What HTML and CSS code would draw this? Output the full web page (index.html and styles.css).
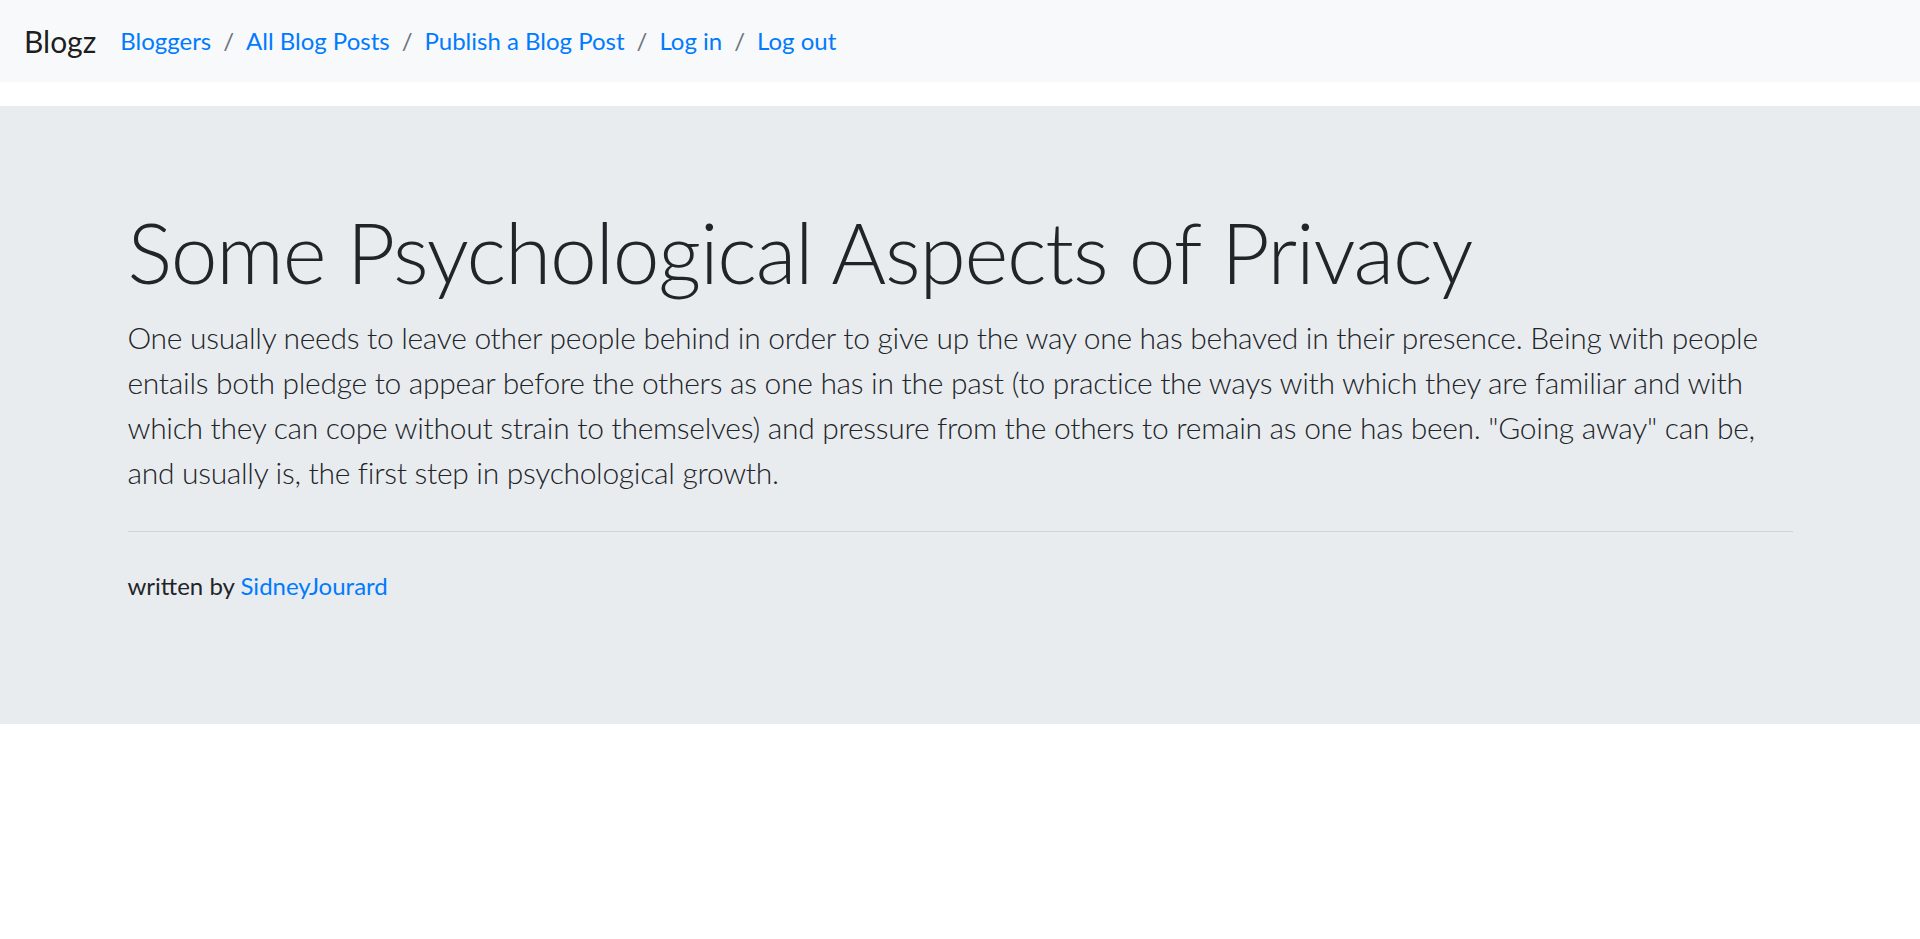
FILE: index.html
```html
<!DOCTYPE html>
<html lang="en">
<head>
<meta charset="utf-8">
<title>Blogz</title>
<link rel="stylesheet" href="styles.css">
</head>
<body>
<nav class="navbar">
  <a class="brand" href="#">Blogz</a>
  <ol class="crumbs">
    <li class="crumb"><a href="#">Bloggers</a></li>
    <li class="crumb"><a href="#">All Blog Posts</a></li>
    <li class="crumb"><a href="#">Publish a Blog Post</a></li>
    <li class="crumb"><a href="#">Log in</a></li>
    <li class="crumb"><a href="#">Log out</a></li>
  </ol>
</nav>
<main class="jumbotron">
  <div class="container">
    <h1 class="display">Some Psychological Aspects of Privacy</h1>
    <p class="lead">One usually needs to leave other people behind in order to give up the way one has behaved in their presence. Being with people entails both pledge to appear before the others as one has in the past (to practice the ways with which they are familiar and with which they can cope without strain to themselves) and pressure from the others to remain as one has been. "Going away" can be, and usually is, the first step in psychological growth.</p>
    <hr class="divider">
    <p class="byline">written by <a href="#">SidneyJourard</a></p>
  </div>
</main>
</body>
</html>
```
FILE: styles.css
```css
* { box-sizing: border-box; }
html, body { margin: 0; padding: 0; }
body {
  font-family: "Lato", "Liberation Sans", sans-serif;
  font-size: 24px;
  line-height: 1.5;
  color: #212529;
  background: #fff;
}
a { color: #007bff; text-decoration: none; }

.navbar {
  display: flex;
  align-items: center;
  height: 82px;
  padding: 0 24px;
  background: #f8f9fa;
  margin-bottom: 24px;
}
.brand {
  font-size: 30px;
  color: rgba(0,0,0,.9);
  margin-right: 24px;
  line-height: 45px;
}
.crumbs {
  display: flex;
  list-style: none;
  margin: 0;
  padding: 0;
}
.crumb + .crumb { padding-left: 12px; }
.crumb + .crumb::before {
  content: "/";
  color: #6c757d;
  padding-right: 12px;
}

.jumbotron {
  background: #e9ecef;
  padding: 96px 0;
  margin-bottom: 48px;
}
.container {
  width: 1710px;
  margin: 0 auto;
  padding: 0 22.5px;
}
.display {
  font-size: 84px;
  font-weight: 300;
  line-height: 1.2;
  letter-spacing: -0.015em;
  margin: 0 0 12px;
}
.lead {
  font-size: 30px;
  font-weight: 300;
  line-height: 45px;
  letter-spacing: -0.01em;
  margin: 0 0 24px;
}
.divider {
  border: 0;
  border-top: 1px solid rgba(0,0,0,.1);
  margin: 36px 0;
}
.byline {
  margin: 0 0 24px;
  line-height: 36px;
}
```
